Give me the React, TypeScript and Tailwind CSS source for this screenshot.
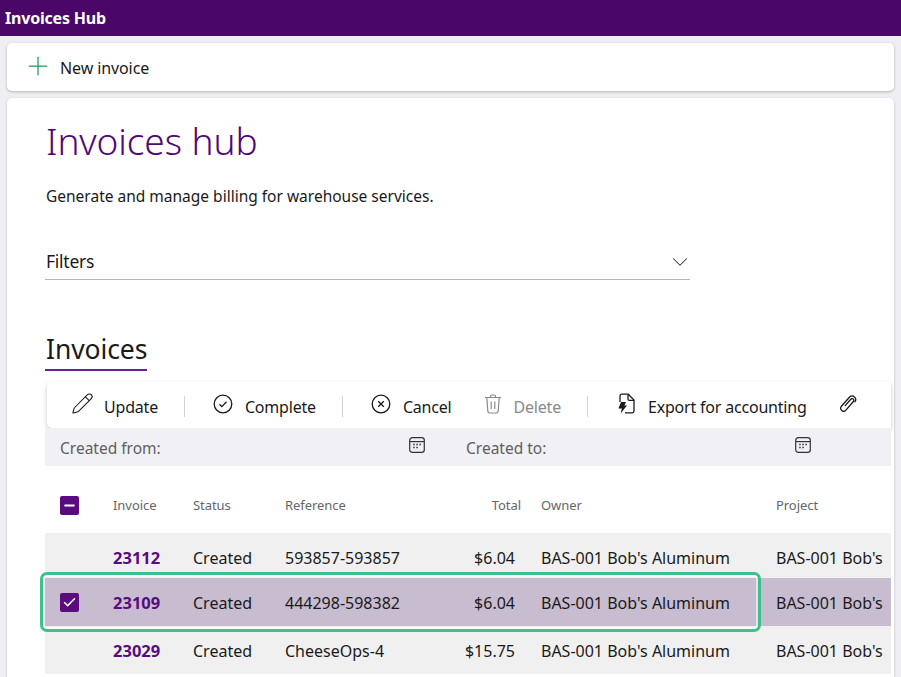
import { Check, ChevronDown, Minus, Pencil, Plus } from "lucide-react";

const rows = [
  { id: "23112", ref: "593857-593857", total: "$6.04", height: "h-[45px] pt-[5px]" },
  { id: "23109", ref: "444298-598382", total: "$6.04", height: "h-[48px] pt-[2px]", selected: true },
  { id: "23029", ref: "CheeseOps-4", total: "$15.75", height: "h-[48px] pt-[2px]" },
];

const gridCols = "grid grid-cols-[68px_80px_92px_190px_46px_255px_200px] items-center";

const CircleCheck = () => (
  <svg width="20" height="20" viewBox="0 0 20 20" fill="none" stroke="#1a1a1a" strokeWidth="1.3">
    <circle cx="10" cy="10" r="8.8" />
    <path d="M6.5 10.3l2.4 2.3 4.6-4.8" />
  </svg>
);

const CircleX = () => (
  <svg width="20" height="20" viewBox="0 0 20 20" fill="none" stroke="#1a1a1a" strokeWidth="1.3">
    <circle cx="10" cy="10" r="8.8" />
    <path d="M7.2 7.2l5.6 5.6M12.8 7.2l-5.6 5.6" />
  </svg>
);

const Trash = () => (
  <svg width="18" height="20" viewBox="0 0 18 20" fill="none" stroke="#8a8a8a" strokeWidth="1.2">
    <path d="M1 3.5h16M6.5 3.5V2.2c0-.7.5-1.2 1.2-1.2h2.6c.7 0 1.2.5 1.2 1.2v1.3" />
    <path d="M2.8 3.5l1 13.6c.1 1 .9 1.9 2 1.9h6.4c1.1 0 1.9-.9 2-1.9l1-13.6" />
    <path d="M7.2 7.5v7.5M10.8 7.5v7.5" />
  </svg>
);

const ExportFile = () => (
  <svg width="20" height="22" viewBox="0 0 20 22" fill="none" stroke="#1a1a1a" strokeWidth="1.3">
    <path d="M4 9V3c0-1 .8-1.8 1.8-1.8h6.4L18 7v11c0 1-.8 1.8-1.8 1.8H9" />
    <path d="M12 1.5V6c0 .8.6 1.4 1.4 1.4H18" />
    <path d="M5 9h5l-1.6 3.6H11L4.6 20.6l1.3-5H2.4z" fill="#1a1a1a" stroke="none" />
  </svg>
);

const Clip = () => (
  <svg width="18" height="20" viewBox="0 0 18 20" fill="none" stroke="#1a1a1a" strokeWidth="1.3" strokeLinecap="round">
    <path d="M6.2 11.6l5.6-6.3a1.7 1.7 0 0 1 2.6 2.2L6.7 16.4a3 3 0 0 1-4.5-3.9L10.6 3a3.6 3.6 0 0 1 5.4 4.7" />
  </svg>
);

const CalendarIcon = () => (
  <svg width="16" height="16" viewBox="0 0 16 16" fill="none" stroke="#333" strokeWidth="1.2">
    <rect x="0.7" y="0.7" width="14.6" height="14.6" rx="2.6" />
    <path d="M1 4.6h14" />
    <path d="M4.2 7.4h1.5M7.3 7.4h1.5M10.4 7.4h1.5M4.2 10.4h1.5M7.3 10.4h1.5" strokeWidth="1.5" />
  </svg>
);

const Divider = () => <div className="h-[21px] w-px bg-[#d4d4d4]" />;

const App = () => {
  return (
    <div className="h-[677px] w-[901px] overflow-hidden bg-[#eeeef3] font-['Noto_Sans',sans-serif] text-[#1a1a1a]">
      {/* Title bar */}
      <header className="flex h-9 items-center bg-[#4a0768] px-[5px] text-[16px] font-bold tracking-[-0.2px] text-white">
        Invoices Hub
      </header>

      <div className="flex flex-col gap-[7px] px-[7px] pt-[7px]">
        {/* Command bar */}
        <div className="flex h-12 items-center rounded-[5px] bg-white pl-[16px] shadow-[0_1px_3px_rgba(0,0,0,0.25)]">
          <Plus size={30} strokeWidth={1} className="-translate-y-[1px] text-[#1f9a63]" />
          <span className="ml-[7px] pt-[2px] text-[16px] tracking-[-0.1px]">New invoice</span>
        </div>

        {/* Main card */}
        <main className="h-[600px] rounded-[5px] bg-white pl-[38px] pr-[3px] shadow-[0_1px_3px_rgba(0,0,0,0.2)]">
          <h1 className="pl-[1px] pt-[16px] text-[37px] leading-[54px] font-light tracking-[-0.1px] text-[#4f0a78]">
            Invoices hub
          </h1>
          <p className="mt-[17px] pl-[1px] text-[15.5px] leading-[22px]">
            Generate and manage billing for warehouse services.
          </p>

          {/* Filters */}
          <div className="mt-[41px] flex h-[32px] w-[645px] items-center justify-between border-b border-[#b5b5b5] pb-[4px]">
            <span className="pl-[1px] text-[17.5px] tracking-[-0.25px]">Filters</span>
            <ChevronDown size={26} strokeWidth={0.95} className="-mr-[3px] text-[#333]" />
          </div>

          {/* Tab */}
          <div className="mt-[51px] flex">
            <div className="border-b-[2px] border-[#6b1f93] pb-[1px] pl-[1px] text-[26.5px] leading-[37px] tracking-[-0.1px]">
              Invoices
            </div>
          </div>

          {/* Toolbar */}
          <div className="ml-[2px] mt-[11px] flex h-[46px] items-center rounded-l-[5px] bg-white pl-[24px] pt-[3px] text-[16px] tracking-[-0.2px] shadow-[0_2px_4px_rgba(0,0,0,0.22)]">
            <Pencil size={23} strokeWidth={1.1} className="-translate-y-[3px]" />
            <span className="ml-[10px]">Update</span>
            <div className="ml-[26px] mr-[28px]"><Divider /></div>
            <div className="-translate-y-[3px]"><CircleCheck /></div>
            <span className="ml-[12px]">Complete</span>
            <div className="ml-[26px] mr-[28px]"><Divider /></div>
            <div className="-translate-y-[3px]"><CircleX /></div>
            <span className="ml-[12px]">Cancel</span>
            <div className="ml-[32px] -translate-y-[3px]"><Trash /></div>
            <span className="ml-[12px] text-[#8a8a8a]">Delete</span>
            <div className="ml-[26px] mr-[28px]"><Divider /></div>
            <div className="-translate-y-[3px]"><ExportFile /></div>
            <span className="ml-[12px]">Export for accounting</span>
            <div className="ml-[32px] -translate-y-[3px]"><Clip /></div>
          </div>

          {/* Date filters */}
          <div className="flex h-[38px] items-center bg-[#f0f0f5] pl-[15px] pt-[4px] text-[15.5px] text-[#5f5f5f]">
            <div className="flex w-[406px] items-center justify-between pr-[41px]">
              <span>Created from:</span>
              <div className="-translate-y-[4px]"><CalendarIcon /></div>
            </div>
            <div className="flex w-[386px] items-center justify-between pr-[41px]">
              <span>Created to:</span>
              <div className="-translate-y-[4px]"><CalendarIcon /></div>
            </div>
          </div>

          {/* Table */}
          <div className="overflow-hidden">
            <div className={`${gridCols} h-[67px] pt-[11px] text-[13px] tracking-[-0.05px] text-[#666]`}>
              <div className="pl-[15px]">
                <div className="flex h-[19px] w-[19px] items-center justify-center rounded-[2px] bg-[#5b0a80]">
                  <Minus size={15} strokeWidth={3} className="text-white" />
                </div>
              </div>
              <span className="pt-[1px]">Invoice</span>
              <span className="pt-[1px]">Status</span>
              <span className="pt-[1px]">Reference</span>
              <span className="pt-[1px] text-right">Total</span>
              <span className="pl-[20px] pt-[1px]">Owner</span>
              <span className="pt-[1px]">Project</span>
            </div>

            <div className="flex flex-col text-[16px]">
              {rows.map((row) => (
                <div key={row.id} className={`${gridCols} ${row.height} ${row.selected ? "bg-[#c8bcd0]" : "bg-[#f0f0f0]"}`}>
                  <div className={row.selected ? "-mt-[2px] pl-[15px]" : "pl-[15px]"}>
                    {row.selected && (
                      <div className="flex h-[19px] w-[19px] items-center justify-center rounded-[2px] bg-[#5b0a80]">
                        <Check size={15} strokeWidth={2.4} className="text-white" />
                      </div>
                    )}
                  </div>
                  <span className="text-[16.5px] font-bold text-[#5b0a80]">{row.id}</span>
                  <span>Created</span>
                  <span>{row.ref}</span>
                  <div className="flex justify-end whitespace-nowrap pr-[6px]">{row.total}</div>
                  <span className="whitespace-nowrap pl-[20px]">BAS-001 Bob's Aluminum</span>
                  <span className="whitespace-nowrap">BAS-001 Bob's</span>
                </div>
              ))}
            </div>
          </div>
        </main>
      </div>

      {/* Highlight drawn over the selected row */}
      <div className="pointer-events-none absolute left-[40px] top-[572px] h-[60px] w-[721px] rounded-[7px] border-[3.5px] border-[#3cc08c] shadow-[inset_0_0_0_2px_rgba(255,255,255,0.55)]" />
    </div>
  );
};

export default App;
